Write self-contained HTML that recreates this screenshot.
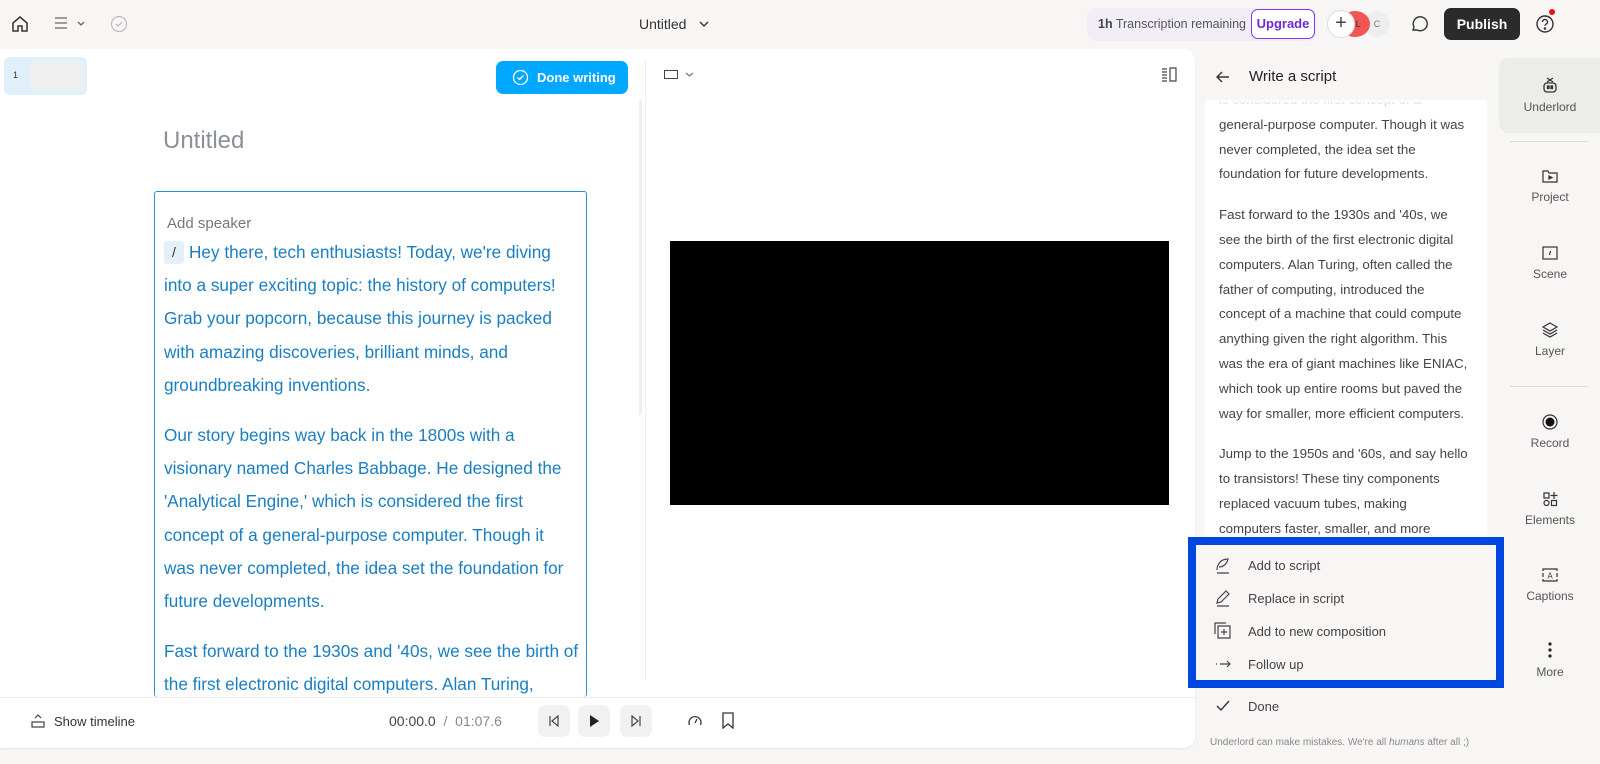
<!DOCTYPE html>
<html><head><meta charset="utf-8"><style>
*{box-sizing:border-box;margin:0;padding:0}
body{width:1600px;height:764px;overflow:hidden;background:#f7f6f5;font-family:"Liberation Sans",sans-serif;position:relative;color:#222}
.abs{position:absolute}
svg{display:block}
.sc{font-size:13.3px;color:#444;line-height:24.8px;white-space:nowrap}
.sb{position:absolute;left:1500px;width:100px;text-align:center;font-size:12px;color:#555}
.sb svg{margin:0 auto 6px}
.mi{position:absolute;left:1214px;font-size:13px;color:#444;display:flex;align-items:center}
.mi svg{margin-right:16px}
.ed{white-space:nowrap}
</style></head><body>
<!-- top bar -->
<svg class="abs" style="left:10px;top:14px" width="20" height="20" viewBox="0 0 20 20" fill="none" stroke="#333" stroke-width="1.5"><path d="M3 9l7-6 7 6v8H12v-5H8v5H3z"/></svg>
<svg class="abs" style="left:54px;top:16px" width="34" height="14" viewBox="0 0 34 14" fill="none" stroke="#666" stroke-width="1.3"><path d="M1 2h12M1 7h12M1 12h12M24 6l3 3 3-3"/></svg>
<svg class="abs" style="left:110px;top:15px" width="18" height="18" viewBox="0 0 18 18" fill="none" stroke="#bbb" stroke-width="1.2"><circle cx="9" cy="9" r="7.5"/><path d="M6 9l2 2 4-4"/></svg>
<div class="abs" style="left:639px;top:16px;font-size:14px;color:#333">Untitled</div>
<svg class="abs" style="left:698px;top:19px" width="12" height="10" viewBox="0 0 12 10" fill="none" stroke="#333" stroke-width="1.4"><path d="M2 3l4 4 4-4"/></svg>
<div class="abs" style="left:1087px;top:8px;width:230px;height:33px;background:#f1eef8;border-radius:9px"></div>
<div class="abs" style="left:1098px;top:17px;font-size:12.5px;color:#555;white-space:nowrap"><b style="color:#444">1h</b> Transcription remaining</div>
<div class="abs" style="left:1251px;top:9px;width:64px;height:30px;border:1.5px solid #7c3aed;border-radius:7px;background:#fff;color:#6d28d9;font-size:13px;font-weight:bold;text-align:center;line-height:27px">Upgrade</div>
<div class="abs" style="left:1364px;top:11px;width:26px;height:26px;border-radius:50%;background:#eee;font-size:9px;color:#777;text-align:center;line-height:26px">C</div>
<div class="abs" style="left:1340px;top:11px;width:30px;height:26px;border-radius:50%;background:#f25555;font-size:9px;color:#333;text-align:center;line-height:26px">CL</div>
<div class="abs" style="left:1327px;top:10px;width:28px;height:28px;border-radius:50%;background:#fff;border:1px solid #ddd;text-align:center;line-height:25px;font-size:20px;color:#444">+</div>
<svg class="abs" style="left:1409px;top:14px" width="20" height="20" viewBox="0 0 20 20" fill="none" stroke="#333" stroke-width="1.4"><path d="M4 16l1-3A7 7 0 1 1 8 16z"/></svg>
<div class="abs" style="left:1444px;top:8px;width:76px;height:32px;background:#2b2b2b;border-radius:7px;color:#fff;font-weight:bold;font-size:14px;text-align:center;line-height:32px">Publish</div>
<svg class="abs" style="left:1535px;top:14px" width="20" height="20" viewBox="0 0 20 20" fill="none" stroke="#333" stroke-width="1.4"><circle cx="10" cy="10" r="8"/><path d="M7.5 8a2.5 2.5 0 1 1 3.5 2.2c-.7.4-1 .8-1 1.6"/><circle cx="10" cy="14.5" r=".6" fill="#333"/></svg>
<div class="abs" style="left:1549px;top:9px;width:6px;height:6px;border-radius:50%;background:#e11"></div>

<!-- main white panel -->
<div class="abs" style="left:0;top:49px;width:1195px;height:699px;background:#fff;border-radius:0 12px 12px 0;box-shadow:0 1px 2px rgba(0,0,0,.08)"></div>
<div class="abs" style="left:4px;top:57px;width:83px;height:38px;background:#dff0fb;border-radius:6px"></div>
<div class="abs" style="left:13px;top:70px;font-size:9px;color:#333">1</div>
<div class="abs" style="left:30px;top:62px;width:53px;height:28px;background:#efefef;border-radius:4px"></div>
<div class="abs" style="left:496px;top:61px;width:132px;height:33px;background:#00a9ff;border-radius:7px;color:#fff;font-weight:bold;font-size:13px;line-height:33px;padding-left:41px">Done writing</div>
<svg class="abs" style="left:512px;top:69px" width="17" height="17" viewBox="0 0 17 17" fill="none" stroke="#fff" stroke-width="1.3"><circle cx="8.5" cy="8.5" r="7"/><path d="M5.5 8.5l2 2 4-4"/></svg>
<div class="abs" style="left:163px;top:127px;font-size:24px;color:#8a8f99">Untitled</div>
<div class="abs" style="left:639px;top:100px;width:3px;height:315px;background:#f0f0f0"></div>
<div class="abs" style="left:645px;top:60px;width:1px;height:620px;background:#eee"></div>
<div class="abs" style="left:154px;top:191px;width:433px;height:506px;border:1.5px solid #2b8fd6;border-bottom:none;border-radius:3px"></div>
<div class="abs" style="left:167px;top:215px;font-size:15px;color:#777">Add speaker</div>
<div class="abs" style="left:164px;top:241px;width:20px;height:23px;background:#e3f0f9;border-radius:3px;font-size:14px;color:#333;text-align:center;line-height:23px">/</div>
<div class="abs ed" style="left:164px;top:236px;font-size:17.2px;line-height:33.2px;color:#1a7fc1">
<p style="text-indent:25px">Hey there, tech enthusiasts! Today, we're diving<br>into a super exciting topic: the history of computers!<br>Grab your popcorn, because this journey is packed<br>with amazing discoveries, brilliant minds, and<br>groundbreaking inventions.</p>
<p style="margin-top:17px">Our story begins way back in the 1800s with a<br>visionary named Charles Babbage. He designed the<br>'Analytical Engine,' which is considered the first<br>concept of a general-purpose computer. Though it<br>was never completed, the idea set the foundation for<br>future developments.</p>
<p style="margin-top:17px">Fast forward to the 1930s and '40s, we see the birth of<br>the first electronic digital computers. Alan Turing,</p>
</div>
<div class="abs" style="left:0;top:697px;width:1195px;height:51px;background:#fff;border-top:1px solid #eee;border-radius:0 0 12px 0"></div>
<svg class="abs" style="left:30px;top:714px" width="16" height="14" viewBox="0 0 16 14" fill="none" stroke="#444" stroke-width="1.2"><path d="M5 4l3-3 3 3M2 8h12v5H2z"/></svg>
<div class="abs" style="left:54px;top:714px;font-size:13px;color:#333">Show timeline</div>
<div class="abs" style="left:389px;top:713px;font-size:14px;color:#444">00:00.0 &nbsp;<span style="color:#888">/ &nbsp;01:07.6</span></div>
<div class="abs" style="left:538px;top:705px;width:32px;height:32px;background:#f1f1f1;border-radius:7px"></div>
<div class="abs" style="left:578px;top:705px;width:32px;height:32px;background:#f1f1f1;border-radius:7px"></div>
<div class="abs" style="left:620px;top:705px;width:32px;height:32px;background:#f1f1f1;border-radius:7px"></div>
<svg class="abs" style="left:547px;top:714px" width="14" height="14" viewBox="0 0 14 14" fill="none" stroke="#444" stroke-width="1.2"><path d="M3 2v10M11 2L5 7l6 5z"/></svg>
<svg class="abs" style="left:587px;top:714px" width="14" height="14" viewBox="0 0 14 14"><path d="M3 1l9 6-9 6z" fill="#222"/></svg>
<svg class="abs" style="left:629px;top:714px" width="14" height="14" viewBox="0 0 14 14" fill="none" stroke="#444" stroke-width="1.2"><path d="M11 2v10M3 2l6 5-6 5z"/></svg>
<svg class="abs" style="left:687px;top:713px" width="16" height="16" viewBox="0 0 16 16" fill="none" stroke="#333" stroke-width="1.3"><path d="M2.5 12a6 6 0 1 1 11 0M8 10l2-4"/></svg>
<svg class="abs" style="left:721px;top:712px" width="14" height="17" viewBox="0 0 14 17" fill="none" stroke="#333" stroke-width="1.3"><path d="M2 1h10v15l-5-4-5 4z"/></svg>
<!-- preview -->
<div class="abs" style="left:664px;top:70px;width:14px;height:9px;border:1.3px solid #444"></div>
<svg class="abs" style="left:685px;top:71px" width="9" height="7" viewBox="0 0 9 7" fill="none" stroke="#777" stroke-width="1.2"><path d="M1 2l3.5 3 3.5-3"/></svg>
<svg class="abs" style="left:1161px;top:67px" width="17" height="15" viewBox="0 0 17 15" fill="none" stroke="#444" stroke-width="1.2"><path d="M1 2h5M1 5h5M1 8h5M1 11h5M1 14h5M9 1h6v13H9z"/></svg>
<div class="abs" style="left:670px;top:241px;width:499px;height:264px;background:#000"></div>

<!-- right panel -->
<svg class="abs" style="left:1215px;top:69px" width="16" height="16" viewBox="0 0 16 16" fill="none" stroke="#333" stroke-width="1.4"><path d="M14 8H2M7 3L2 8l5 5"/></svg>
<div class="abs" style="left:1249px;top:68px;font-size:15px;color:#222">Write a script</div>
<div class="abs" style="left:1205px;top:100px;width:282px;height:440px;background:#fff;overflow:hidden">
<div class="sc" style="position:absolute;left:14px;top:-12px">
<p>is considered the first concept of a<br>general-purpose computer. Though it was<br>never completed, the idea set the<br>foundation for future developments.</p>
<p style="margin-top:16px">Fast forward to the 1930s and '40s, we<br>see the birth of the first electronic digital<br>computers. Alan Turing, often called the<br>father of computing, introduced the<br>concept of a machine that could compute<br>anything given the right algorithm. This<br>was the era of giant machines like ENIAC,<br>which took up entire rooms but paved the<br>way for smaller, more efficient computers.</p>
<p style="margin-top:16px">Jump to the 1950s and '60s, and say hello<br>to transistors! These tiny components<br>replaced vacuum tubes, making<br>computers faster, smaller, and more</p>
</div>
<div style="position:absolute;left:0;top:0;width:282px;height:14px;background:linear-gradient(#fff,rgba(255,255,255,.3))"></div>
</div>
<div class="abs" style="left:1188px;top:537px;width:316px;height:151px;border:8px solid #0047e0;background:#f7f6f5"></div>
<div class="mi" style="top:556px"><svg width="18" height="18" viewBox="0 0 18 18" fill="none" stroke="#444" stroke-width="1.2"><path d="M3 14c0-6 4-11 11-11-1 5-5 8-9 8M3 17h12"/></svg>Add to script</div>
<div class="mi" style="top:589px"><svg width="18" height="18" viewBox="0 0 18 18" fill="none" stroke="#444" stroke-width="1.2"><path d="M3 14l1-4 8-8 3 3-8 8zM3 17h12"/></svg>Replace in script</div>
<div class="mi" style="top:622px"><svg width="18" height="18" viewBox="0 0 18 18" fill="none" stroke="#444" stroke-width="1.2"><path d="M1 12V1h11M4 4h12v12H4zM10 7v6M7 10h6"/></svg>Add to new composition</div>
<div class="mi" style="top:655px"><svg width="18" height="18" viewBox="0 0 18 18" fill="none" stroke="#444" stroke-width="1.2"><path d="M2 9h1M6 9h10M13 6l3 3-3 3"/></svg>Follow up</div>
<div class="mi" style="top:697px"><svg width="18" height="18" viewBox="0 0 18 18" fill="none" stroke="#333" stroke-width="1.4"><path d="M3 9l4 4 8-9"/></svg>Done</div>
<div class="abs" style="left:1210px;top:737px;font-size:10px;color:#888">Underlord can make mistakes. We're all <i>humans</i> after all ;)</div>

<!-- sidebar -->
<div class="abs" style="left:1499px;top:58px;width:110px;height:75px;background:#ececea;border-radius:10px"></div>
<div class="sb" style="top:76px"><svg width="18" height="18" viewBox="0 0 18 18" fill="none" stroke="#333" stroke-width="1.3"><rect x="3" y="7" width="12" height="9" rx="3"/><path d="M6 2l6 4M12 2L6 6"/><rect x="6.5" y="10" width="1.5" height="2.5" fill="#333"/><rect x="10" y="10" width="1.5" height="2.5" fill="#333"/></svg>Underlord</div>
<div class="abs" style="left:1510px;top:141px;width:78px;height:1px;background:#ddd"></div>
<div class="sb" style="top:168px"><svg width="16" height="16" viewBox="0 0 16 16" fill="none" stroke="#333" stroke-width="1.2"><path d="M1 3h5l1 2h8v9H1z"/><path d="M7 8l3 1.5L7 11z" fill="#333"/></svg>Project</div>
<div class="sb" style="top:245px"><svg width="16" height="16" viewBox="0 0 16 16" fill="none" stroke="#333" stroke-width="1.2"><rect x="1" y="2" width="14" height="12"/><path d="M8.5 6l-1 4"/></svg>Scene</div>
<div class="sb" style="top:322px"><svg width="16" height="16" viewBox="0 0 16 16" fill="none" stroke="#333" stroke-width="1.2"><path d="M8 1l7 4-7 4-7-4zM1 8l7 4 7-4M1 11l7 4 7-4"/></svg>Layer</div>
<div class="abs" style="left:1510px;top:386px;width:78px;height:1px;background:#ddd"></div>
<div class="sb" style="top:414px"><svg width="16" height="16" viewBox="0 0 16 16"><circle cx="8" cy="8" r="7" fill="none" stroke="#333" stroke-width="1.2"/><circle cx="8" cy="8" r="4.5" fill="#111"/></svg>Record</div>
<div class="sb" style="top:491px"><svg width="16" height="16" viewBox="0 0 16 16" fill="none" stroke="#333" stroke-width="1.2"><rect x="2" y="2" width="5" height="5"/><path d="M12 1v7M8.5 4.5h7"/><circle cx="4.5" cy="12" r="2.5"/><rect x="9.5" y="9.5" width="5" height="5"/></svg>Elements</div>
<div class="sb" style="top:567px"><svg width="16" height="16" viewBox="0 0 16 16" fill="none" stroke="#333" stroke-width="1.2"><path d="M1 4V2h14v2M1 12v2h14v-2M1 6v4M15 6v4"/><text x="8" y="11.5" font-size="8" text-anchor="middle" fill="#333" stroke="none" font-family="Liberation Sans">A</text></svg>Captions</div>
<div class="sb" style="top:641px"><svg width="16" height="18" viewBox="0 0 16 18"><circle cx="8" cy="3" r="1.6" fill="#222"/><circle cx="8" cy="9" r="1.6" fill="#222"/><circle cx="8" cy="15" r="1.6" fill="#222"/></svg>More</div>
</body></html>
